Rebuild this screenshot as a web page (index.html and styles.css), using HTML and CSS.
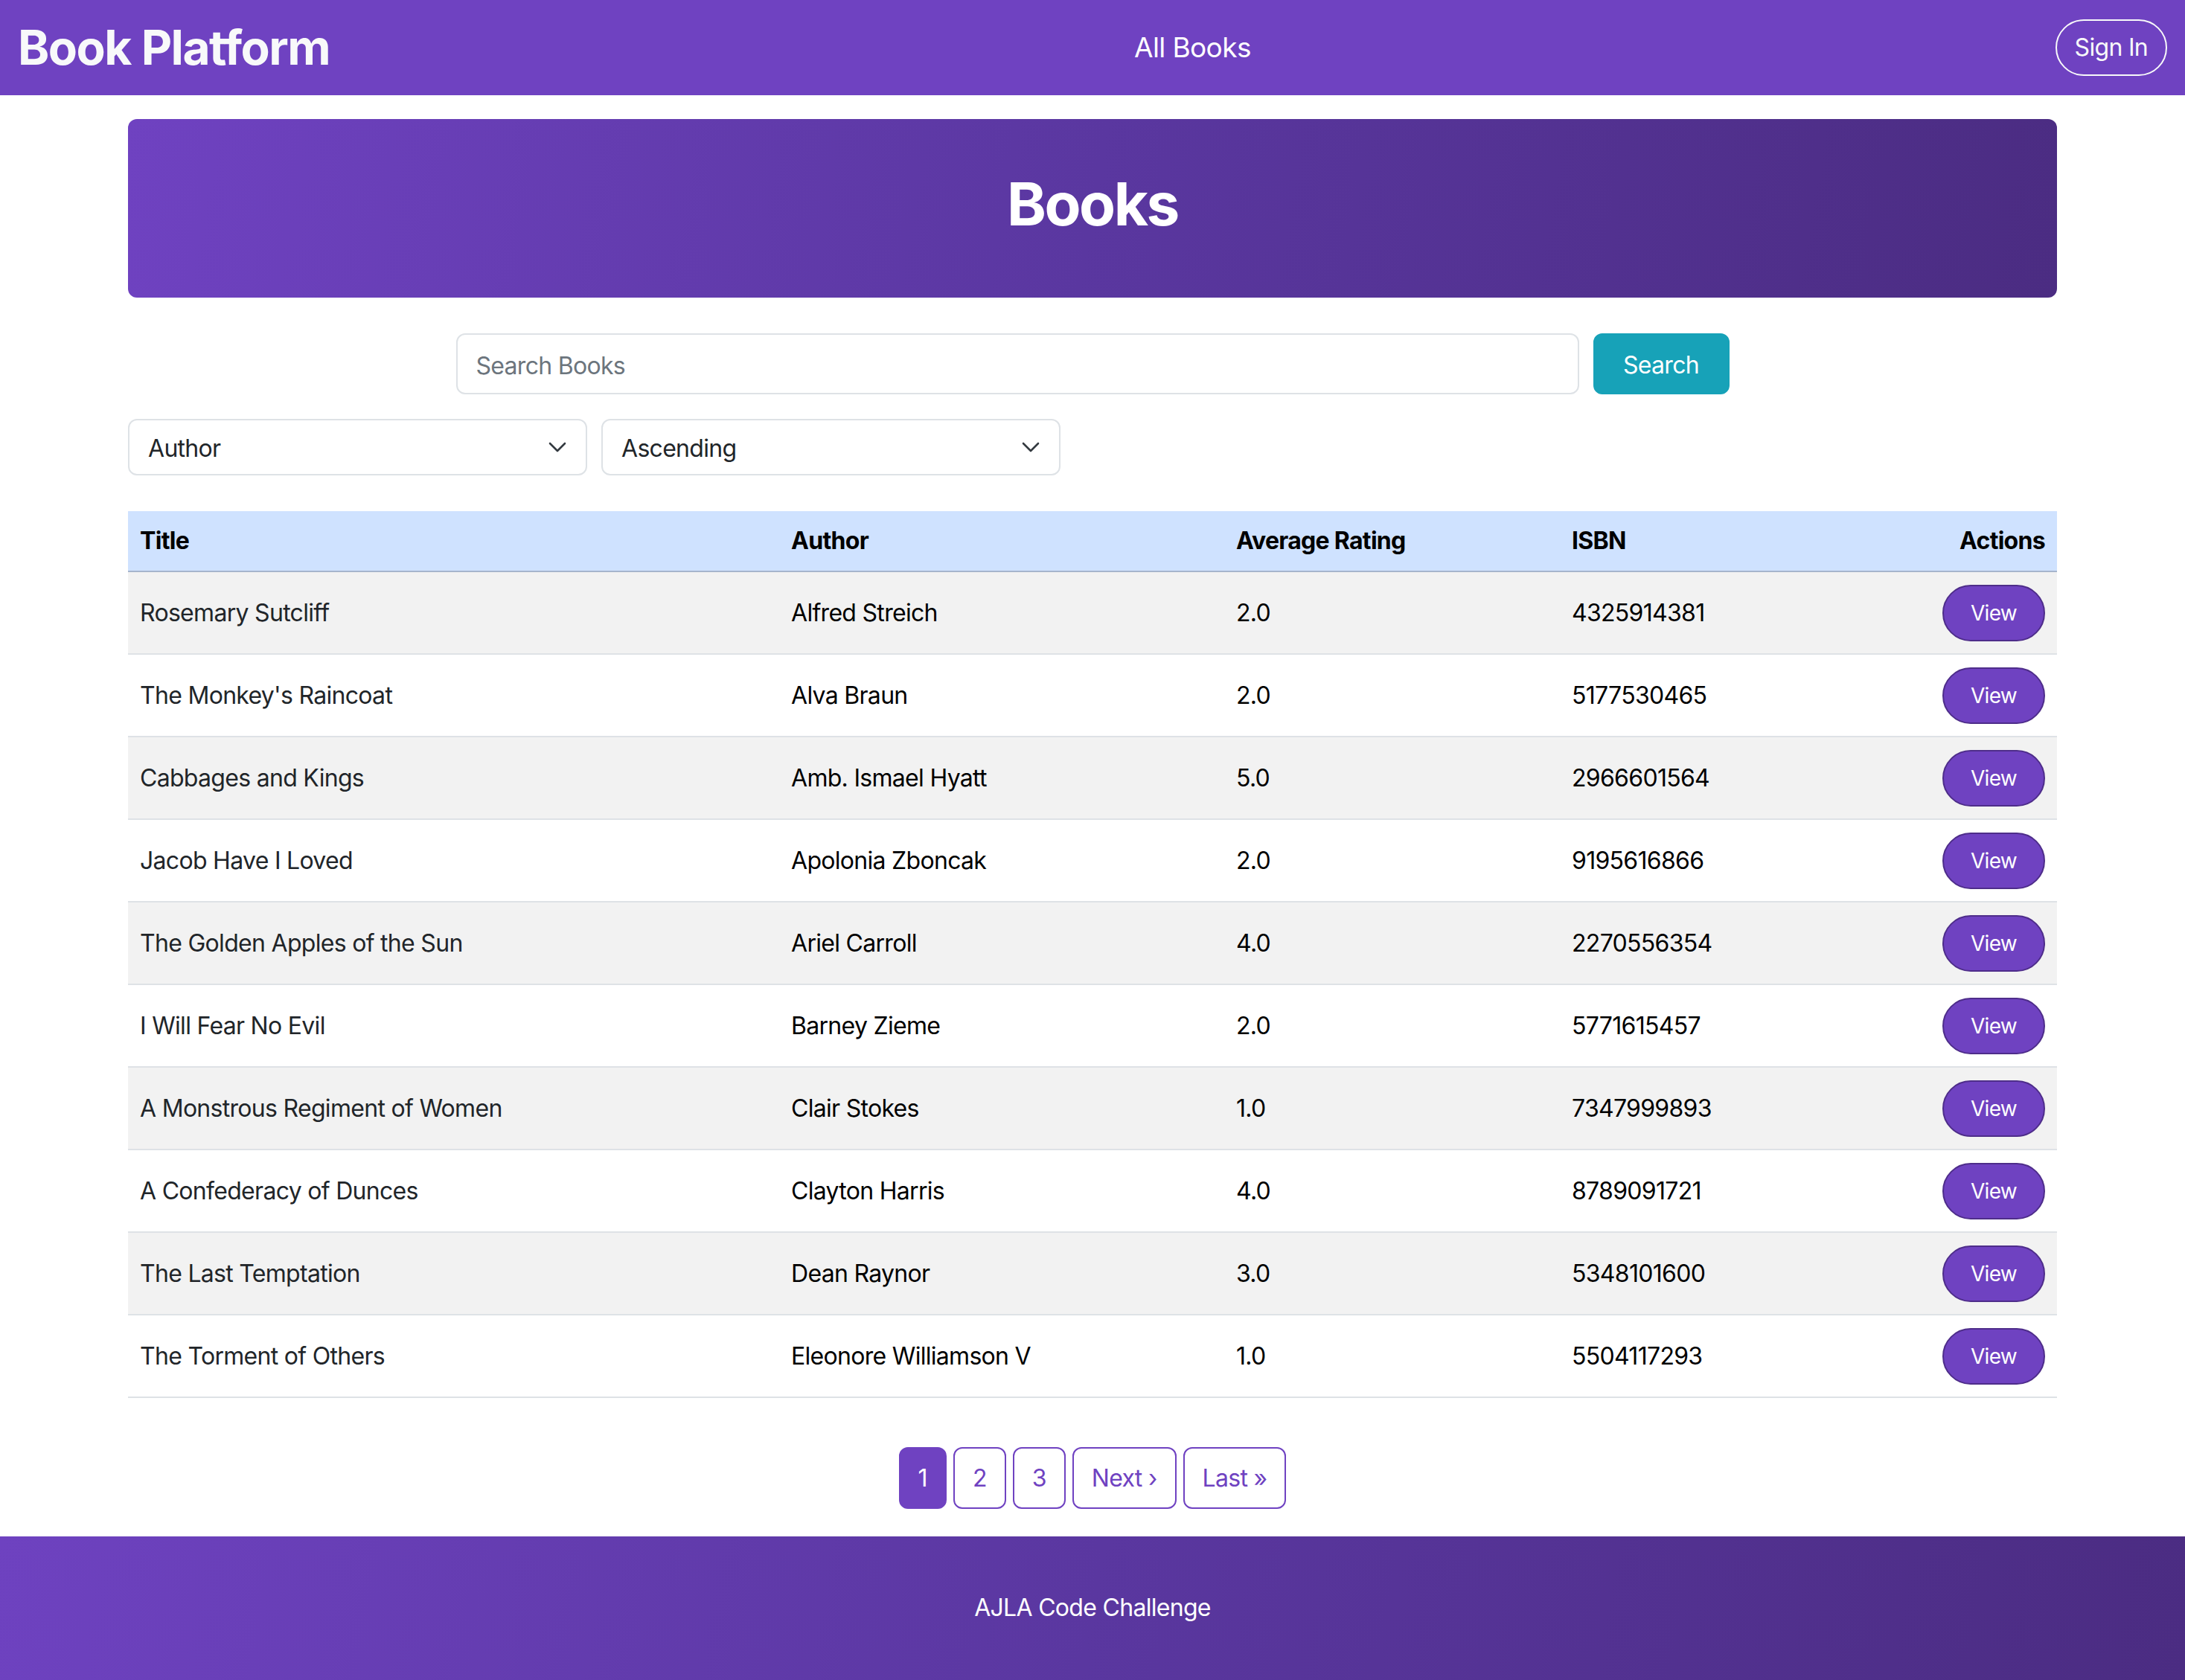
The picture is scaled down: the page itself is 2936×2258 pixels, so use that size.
FILE: index.html
```html
<!DOCTYPE html>
<html lang="en">
<head>
<meta charset="utf-8">
<title>Book Platform</title>
<link rel="stylesheet" href="styles.css">
</head>
<body>
<nav class="navbar">
  <a class="brand" href="#">Book Platform</a>
  <div class="nav-center"><a class="nav-link" href="#">All Books</a></div>
  <button class="btn-signin" type="button">Sign In</button>
</nav>

<main class="container">
  <header class="hero"><h1>Books</h1></header>

  <form class="search-row">
    <input class="search-input" type="text" placeholder="Search Books">
    <button class="btn-search" type="button">Search</button>
  </form>

  <div class="filters">
    <div class="select-wrap">
      <select class="form-select"><option>Author</option><option>Title</option></select>
      <svg class="chev" viewBox="0 0 24 14" width="24" height="14"><path d="M2 2 L12 12 L22 2" fill="none" stroke="#343a40" stroke-width="2.6" stroke-linecap="round" stroke-linejoin="round"/></svg>
    </div>
    <div class="select-wrap">
      <select class="form-select"><option>Ascending</option><option>Descending</option></select>
      <svg class="chev" viewBox="0 0 24 14" width="24" height="14"><path d="M2 2 L12 12 L22 2" fill="none" stroke="#343a40" stroke-width="2.6" stroke-linecap="round" stroke-linejoin="round"/></svg>
    </div>
  </div>

  <table class="books">
    <colgroup>
      <col class="c-title"><col class="c-author"><col class="c-rating"><col class="c-isbn"><col class="c-actions">
    </colgroup>
    <thead>
      <tr><th>Title</th><th>Author</th><th>Average Rating</th><th>ISBN</th><th class="right">Actions</th></tr>
    </thead>
    <tbody>
      <tr><td class="t">Rosemary Sutcliff</td><td>Alfred Streich</td><td>2.0</td><td>4325914381</td><td class="right"><button class="btn-view" type="button">View</button></td></tr>
      <tr><td class="t">The Monkey's Raincoat</td><td>Alva Braun</td><td>2.0</td><td>5177530465</td><td class="right"><button class="btn-view" type="button">View</button></td></tr>
      <tr><td class="t">Cabbages and Kings</td><td>Amb. Ismael Hyatt</td><td>5.0</td><td>2966601564</td><td class="right"><button class="btn-view" type="button">View</button></td></tr>
      <tr><td class="t">Jacob Have I Loved</td><td>Apolonia Zboncak</td><td>2.0</td><td>9195616866</td><td class="right"><button class="btn-view" type="button">View</button></td></tr>
      <tr><td class="t">The Golden Apples of the Sun</td><td>Ariel Carroll</td><td>4.0</td><td>2270556354</td><td class="right"><button class="btn-view" type="button">View</button></td></tr>
      <tr><td class="t">I Will Fear No Evil</td><td>Barney Zieme</td><td>2.0</td><td>5771615457</td><td class="right"><button class="btn-view" type="button">View</button></td></tr>
      <tr><td class="t">A Monstrous Regiment of Women</td><td>Clair Stokes</td><td>1.0</td><td>7347999893</td><td class="right"><button class="btn-view" type="button">View</button></td></tr>
      <tr><td class="t">A Confederacy of Dunces</td><td>Clayton Harris</td><td>4.0</td><td>8789091721</td><td class="right"><button class="btn-view" type="button">View</button></td></tr>
      <tr><td class="t">The Last Temptation</td><td>Dean Raynor</td><td>3.0</td><td>5348101600</td><td class="right"><button class="btn-view" type="button">View</button></td></tr>
      <tr><td class="t">The Torment of Others</td><td>Eleonore Williamson V</td><td>1.0</td><td>5504117293</td><td class="right"><button class="btn-view" type="button">View</button></td></tr>
    </tbody>
  </table>

  <nav class="pagination">
    <a class="page active" href="#">1</a>
    <a class="page" href="#">2</a>
    <a class="page" href="#">3</a>
    <a class="page" href="#">Next ›</a>
    <a class="page" href="#">Last »</a>
  </nav>
</main>

<footer class="footer">AJLA Code Challenge</footer>
</body>
</html>
```

FILE: styles.css
```css
* { box-sizing: border-box; }

html, body {
  margin: 0;
  padding: 0;
}

body {
  font-family: Inter, "Noto Sans", "Liberation Sans", sans-serif;
  font-size: 32px;
  line-height: 48px;
  letter-spacing: -0.7px;
  color: #212529;
  background: #fff;
}

a { text-decoration: none; }

button, input, select { letter-spacing: inherit; }

/* ---------- navbar ---------- */
.navbar {
  display: flex;
  align-items: center;
  height: 128px;
  padding: 0 24px;
  background: #6f42c1;
}

.brand {
  font-size: 64px;
  line-height: 76px;
  font-weight: 700;
  color: #f8f9fa;
  letter-spacing: -1.5px;
}

.nav-center {
  flex: 1;
  text-align: center;
}

.nav-link {
  font-size: 37px;
  line-height: 56px;
  color: #fff;
  letter-spacing: -0.6px;
}

.btn-signin {
  font-family: inherit;
  font-size: 32px;
  line-height: 48px;
  color: #f8f9fa;
  background: transparent;
  border: 2px solid #f8f9fa;
  border-radius: 100px;
  padding: 12px 24px;
}

/* ---------- main ---------- */
.container {
  width: 2592px;
  margin: 0 auto;
}

.hero {
  margin-top: 32px;
  padding: 66px 64px 62px;
  border-radius: 12px;
  background: linear-gradient(100deg, #6f42c1 0%, #5a37a0 50%, #4b2c82 100%);
  text-align: center;
}

.hero h1 {
  margin: 0 0 16px;
  font-size: 80px;
  line-height: 96px;
  font-weight: 700;
  letter-spacing: -2.5px;
  color: #fff;
}

.search-row {
  display: flex;
  gap: 19px;
  width: 1711px;
  margin: 48px auto 0;
}

.search-input {
  flex: 1;
  font-family: inherit;
  font-size: 32px;
  line-height: 48px;
  padding: 18px 25px 12px;
  border: 2px solid #dee2e6;
  border-radius: 12px;
  color: #212529;
}

.search-input::placeholder { color: #6c757d; }

.btn-search {
  width: 183px;
  font-family: inherit;
  font-size: 32px;
  line-height: 48px;
  padding: 4px 0 0;
  color: #fff;
  background: #17a2b8;
  border: 2px solid #17a2b8;
  border-radius: 12px;
}

.filters {
  display: flex;
  gap: 19px;
  margin-top: 33px;
}

.select-wrap {
  position: relative;
  width: 617px;
}

.form-select {
  display: block;
  width: 100%;
  appearance: none;
  -webkit-appearance: none;
  font-family: inherit;
  font-size: 32px;
  line-height: 48px;
  padding: 14px 72px 10px 25px;
  border: 2px solid #dee2e6;
  border-radius: 12px;
  background: #fff;
  color: #212529;
}

.chev {
  position: absolute;
  right: 28px;
  top: 31px;
  pointer-events: none;
}

/* ---------- table ---------- */
.books {
  width: 100%;
  margin-top: 48px;
  border-collapse: collapse;
  table-layout: fixed;
}

.c-title { width: 875px; }
.c-author { width: 598px; }
.c-rating { width: 451px; }
.c-isbn { width: 400px; }

.books th {
  background: #cfe2ff;
  color: #000;
  font-weight: 700;
  text-align: left;
  padding: 16px;
  border-bottom: 2px solid #a6b5cc;
}

.books td {
  padding: 17px 16px 16px;
  vertical-align: middle;
  color: #000;
  border-bottom: 2px solid #dee2e6;
}

.books td.t { color: #212529; }

.books tbody tr:nth-child(odd) td { background: #f2f2f2; }

.books .right { text-align: right; }

.btn-view {
  font-family: inherit;
  font-size: 28px;
  line-height: 42px;
  padding: 15px 36px;
  color: #fff;
  background: #6f42c1;
  border: 2px solid #4e2d8a;
  border-radius: 100px;
}

/* ---------- pagination ---------- */
.pagination {
  display: flex;
  justify-content: center;
  gap: 9px;
  margin-top: 66px;
}

.page {
  display: block;
  padding: 16px 24px;
  font-size: 32px;
  line-height: 47px;
  color: #6f42c1;
  border: 2px solid #6f42c1;
  border-radius: 12px;
  background: #fff;
}

.page.active {
  color: #fff;
  background: #6f42c1;
}

/* ---------- footer ---------- */
.footer {
  margin-top: 37px;
  padding: 72px 0 76px;
  text-align: center;
  color: #fff;
  background: linear-gradient(100deg, #6e42c0 0%, #5a37a0 50%, #4b2c82 100%);
}
```
